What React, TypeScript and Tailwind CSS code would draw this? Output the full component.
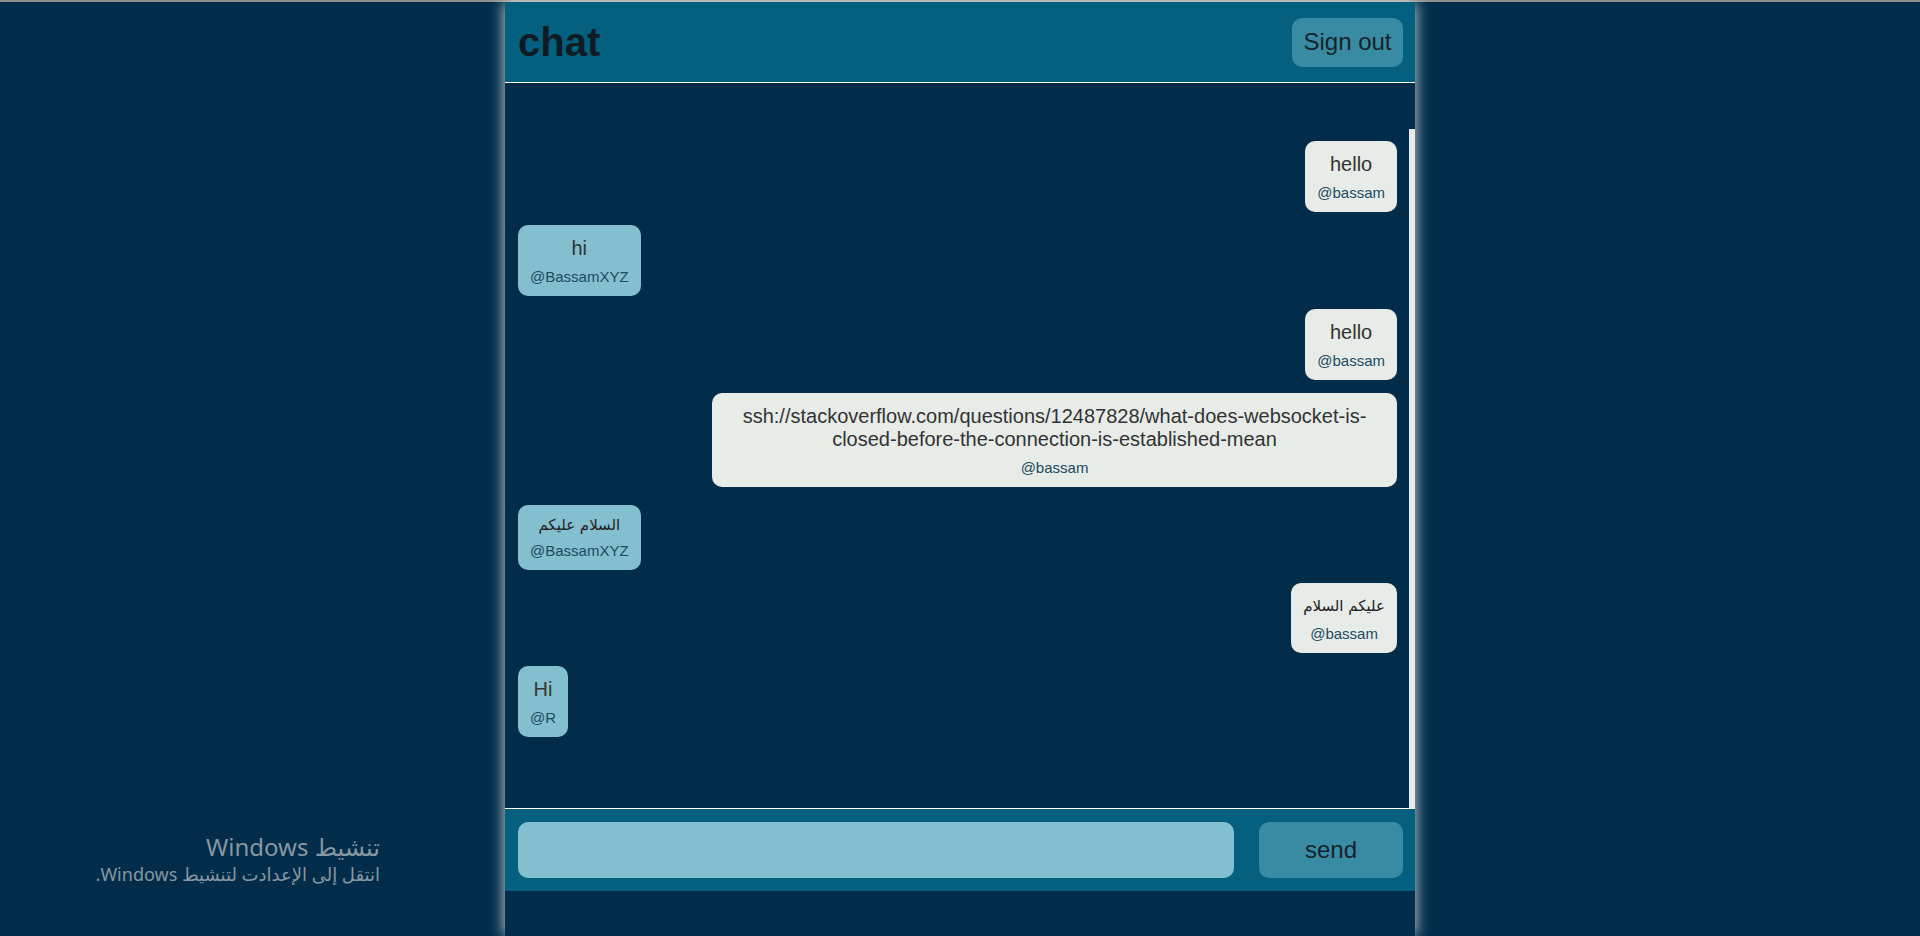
import type { ReactNode } from 'react'

type Message = {
  id: number
  text: string
  user: string
  mine: boolean
  arabic?: boolean
}

const messages: Message[] = [
  { id: 1, text: 'hello', user: '@bassam', mine: true },
  { id: 2, text: 'hi', user: '@BassamXYZ', mine: false },
  { id: 3, text: 'hello', user: '@bassam', mine: true },
  {
    id: 4,
    text: 'ssh://stackoverflow.com/questions/12487828/what-does-websocket-is-closed-before-the-connection-is-established-mean',
    user: '@bassam',
    mine: true,
  },
  { id: 5, text: 'السلام عليكم', user: '@BassamXYZ', mine: false, arabic: true },
  { id: 6, text: 'عليكم السلام', user: '@bassam', mine: true, arabic: true },
  { id: 7, text: 'Hi', user: '@R', mine: false },
]

const Bubble = ({ msg }: { msg: Message }) => {
  const side = msg.mine ? 'self-end bg-[#e7ece8]' : 'self-start bg-[#83bfcf]'
  return (
    <div className={`${side} ${msg.id === 5 ? 'mt-[5px]' : ''} max-w-[685px] rounded-[10px] px-3 pt-3 pb-[11px] text-center`}>
      <p
        dir={msg.arabic ? 'rtl' : 'ltr'}
        className={
          msg.arabic
            ? `text-[15px] text-[#222] font-['DejaVu_Sans',sans-serif] ${msg.id === 5 ? 'leading-[17px]' : 'leading-[22px]'}`
            : 'text-[20px] leading-[23px] text-[#333]'
        }
      >
        {msg.text}
      </p>
      <p className="mt-[8px] text-[15px] leading-[17px] text-[#1d4a5f]">{msg.user}</p>
    </div>
  )
}

const SideColumn = ({ children }: { children?: ReactNode }) => (
  <div className="flex-1 flex flex-col justify-end items-end pr-[125px] pb-[50px]">{children}</div>
)

const App = () => {
  return (
    <div className="h-[936px] flex flex-col bg-[#012d4a] font-['Liberation_Sans','DejaVu_Sans',sans-serif] overflow-hidden">
      <div className="h-[2px] bg-[#8d928e]" />
      <div className="flex-1 flex">
        <SideColumn>
          <div dir="rtl" className="text-right text-[#8797a2] font-['Noto_Sans','DejaVu_Sans',sans-serif]">
            <p className="text-[24px] leading-[30px]">تنشيط Windows</p>
            <p className="text-[18px] leading-[24px]">انتقل إلى الإعدادت لتنشيط Windows.</p>
          </div>
        </SideColumn>

        <div className="w-[910px] shrink-0 flex flex-col bg-[#012d4a] shadow-[0_0_14px_rgba(255,255,255,0.85)]">
          <header className="h-[81px] shrink-0 flex items-center justify-between pl-[13px] pr-[12px] bg-[#05607f] border-b border-white">
            <h1 className="text-[40px] font-bold text-[#0e1b23]">chat</h1>
            <button className="w-[111px] h-[49px] rounded-[10px] bg-[#398aa3] text-[24px] text-[#14232b]">
              Sign out
            </button>
          </header>

          <main className="h-[726px] shrink-0 flex border-b border-white">
            <div className="flex-1 flex flex-col gap-[13px] pt-[58px] pl-[13px] pr-[12px]">
              {messages.map((m) => (
                <Bubble key={m.id} msg={m} />
              ))}
            </div>
            <div className="w-[6px] flex flex-col">
              <div className="mt-[46px] flex-1 bg-[#e8ece9]" />
            </div>
          </main>

          <form
            className="h-[82px] shrink-0 flex items-center gap-[25px] pl-[13px] pr-[12px] bg-[#05607f]"
            onSubmit={(e) => e.preventDefault()}
          >
            <input className="flex-1 h-[56px] rounded-[10px] bg-[#83bfcf] outline-none px-3 text-[20px]" />
            <button type="submit" className="w-[144px] h-[56px] rounded-[10px] bg-[#398aa3] text-[24px] text-[#14232b]">
              send
            </button>
          </form>
          <div className="flex-1" />
        </div>

        <SideColumn />
      </div>
    </div>
  )
}

export default App
